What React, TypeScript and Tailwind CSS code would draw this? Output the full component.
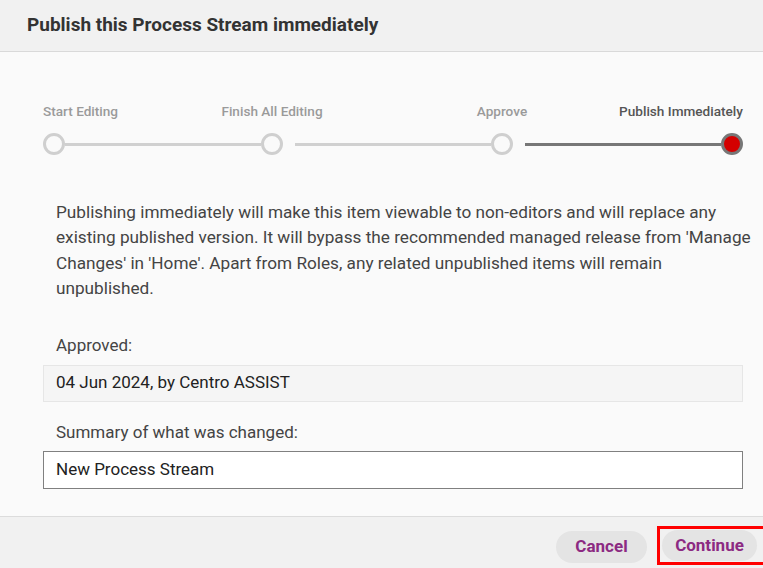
import React from 'react'

const steps = [
  { label: 'Start Editing', align: 'justify-start' },
  { label: 'Finish All Editing', align: 'justify-center' },
  { label: 'Approve', align: 'justify-center' },
  { label: 'Publish Immediately', align: 'justify-end' },
]

function Circle({ active }: { active?: boolean }) {
  return (
    <div
      className={
        active
          ? 'h-[22px] w-[22px] rounded-full border-[3px] border-[#777] bg-[#d40000]'
          : 'h-[22px] w-[22px] rounded-full border-[3px] border-[#cfcfcf] bg-[#fafafa]'
      }
    />
  )
}

function Line({ dark }: { dark?: boolean }) {
  return <div className={dark ? 'h-[3px] bg-[#777]' : 'h-[3px] bg-[#d0d0d0]'} />
}

function Stepper() {
  const cols = 'grid grid-cols-[22px_1fr_22px_12px_1fr_22px_12px_1fr_22px] items-center'
  return (
    <div>
      <div className={cols + ' h-4 text-[13.6px] font-medium leading-4'}>
        <div className={'flex whitespace-nowrap text-[#9a9a9a] ' + steps[0].align}>{steps[0].label}</div>
        <div />
        <div className={'flex whitespace-nowrap text-[#9a9a9a] ' + steps[1].align}>{steps[1].label}</div>
        <div />
        <div />
        <div className={'flex whitespace-nowrap text-[#9a9a9a] ' + steps[2].align}>{steps[2].label}</div>
        <div />
        <div />
        <div className={'flex whitespace-nowrap text-[#555] ' + steps[3].align}>{steps[3].label}</div>
      </div>
      <div className={cols + ' mt-[14px]'}>
        <Circle />
        <Line />
        <Circle />
        <div />
        <Line />
        <Circle />
        <div />
        <Line dark />
        <Circle active />
      </div>
    </div>
  )
}

export default function App() {
  return (
    <div className="flex min-h-[568px] w-[763px] flex-col overflow-hidden bg-[#fafafa] font-['Roboto',sans-serif]">
      <div className="flex h-[52px] items-center border-b border-[#d9d9d9] bg-[#f1f1f1] px-[27px]">
        <h1 className="text-[19px] font-bold text-[#333]">Publish this Process Stream immediately</h1>
      </div>

      <div className="flex-1 pt-[51px] pr-5 pb-[27px] pl-[43px]">
        <Stepper />

        <p className="mt-[45px] mr-[-10px] pl-[13px] text-[17.2px] leading-[25.4px] text-[#444]">
          Publishing immediately will make this item viewable to non-editors and will replace any existing
          published version. It will bypass the recommended managed release from 'Manage Changes' in 'Home'.
          Apart from Roles, any related unpublished items will remain unpublished.
        </p>

        <div className="mt-[31px] pl-[13px] text-[17px] leading-6 text-[#444]">Approved:</div>
        <div className="mt-2 flex h-[37px] items-center border border-[#e6e6e6] bg-[#f5f5f5] px-3 text-[17px] text-[#222]">
          04 Jun 2024, by Centro ASSIST
        </div>

        <div className="mt-[18px] pl-[13px] text-[17px] leading-6 text-[#444]">Summary of what was changed:</div>
        <div className="mt-[7px] flex h-[38px] items-center border border-[#808080] bg-white px-3 text-[17px] text-[#222]">
          New Process Stream
        </div>
      </div>

      <div className="flex h-[52px] items-start justify-end gap-[10px] border-t border-[#dcdcdc] bg-[#f1f1f1] pt-[9px]">
        <button className="mt-[5px] h-[32px] w-[91px] rounded-full bg-[#e4e4e4] text-[17px] font-bold text-[#8c2a82]">
          Cancel
        </button>
        <div className="mr-[-3px] border-[3px] border-[#ff0000] py-px pr-[6px] pl-[2px]">
          <button className="h-[31px] w-[95px] rounded-full bg-[#e4e4e4] text-[17px] font-bold text-[#8c2a82]">
            Continue
          </button>
        </div>
      </div>
    </div>
  )
}
